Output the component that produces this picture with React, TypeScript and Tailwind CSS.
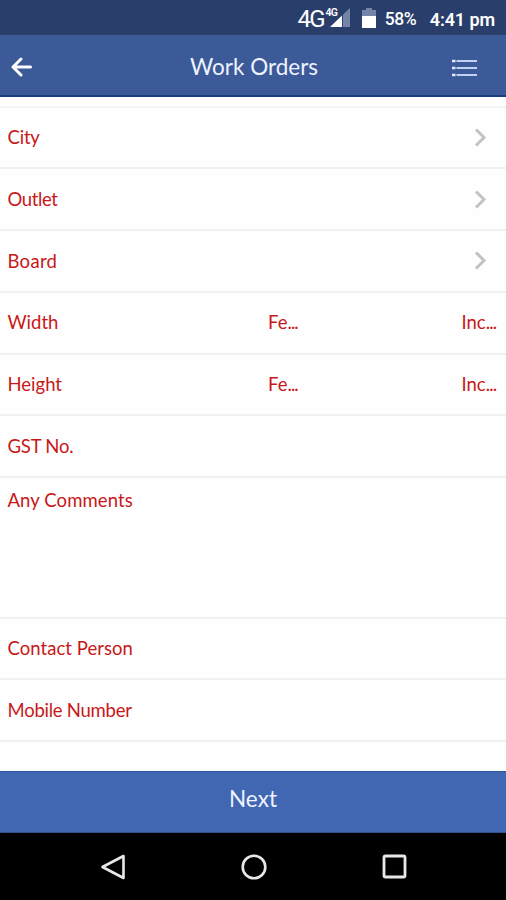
import type { ReactNode } from 'react';

function StatusBar() {
  return (
    <div className="flex h-[35px] items-center justify-end bg-[#293e6b] pr-[11px] font-['Roboto',sans-serif] text-white">
      <span className="mt-0.5 text-[24px] tracking-[-1.8px]">4G</span>
      <svg width="26" height="24" viewBox="0 0 26 24" className="ml-px">
        <text x="0.5" y="10" fontSize="10.5" fontWeight="600" fill="#fff" textLength="12.5">4G</text>
        <path d="M5 21 L17 9.5 V21Z" fill="#fff" />
        <path d="M18 8.5 L25 2 V21 H18Z" fill="#7384a6" />
      </svg>
      <svg width="14" height="22" viewBox="0 0 14 22" className="ml-[11px]">
        <path d="M4 1h6v2h4v7H0V3h4z" fill="#7384a6" />
        <path d="M0 9h14v12H0z" fill="#fff" />
      </svg>
      <span className="mt-[3px] ml-[9px] w-[45px] text-[17.5px] font-medium tracking-[-0.4px]">58%</span>
      <span className="mt-[3px] text-[18px] font-semibold tracking-[-0.1px]">4:41 pm</span>
    </div>
  );
}

function Header() {
  return (
    <header className="flex h-[62px] items-center justify-between border-b-2 border-[#173f80] bg-[#3c5998] pr-[29px] pl-[11px] text-white">
      <svg width="22" height="20" viewBox="0 0 22 20" fill="none" stroke="#fff" strokeWidth="3" strokeLinecap="round" strokeLinejoin="round" className="mt-[3px]">
        <path d="M10 2 L2 10 L10 18 M3 10 H19.5" />
      </svg>
      <h1 className="mt-1 ml-[23px] text-[22.5px] tracking-[0px] text-[#eef3ff]">Work Orders</h1>
      <svg width="25" height="18" viewBox="0 0 25 18" className="mt-[5px]">
        <path d="M0 2h3.5M0 9h3.5M0 16h3.5" stroke="#e2eaff" strokeWidth="2.5" />
        <path d="M4.5 2H25M4.5 9H25M4.5 16H25" stroke="#c2d1f2" strokeWidth="2" />
      </svg>
    </header>
  );
}

function Row({ label, spacing, children }: { label: string; spacing: string; children?: ReactNode }) {
  return (
    <div className="flex h-[61.8px] items-center border-b-2 border-[#f1f1f1] pt-px pr-[9px] pl-[7.5px]">
      <span className={`flex-1 ${spacing}`}>{label}</span>
      {children}
    </div>
  );
}

function Chevron() {
  return (
    <svg width="13" height="19" viewBox="0 0 13 19" fill="none" stroke="#c2c2c2" strokeWidth="3" className="mr-[10px] mb-px">
      <path d="M2 1.5 L10 9.5 L2 17.5" />
    </svg>
  );
}

function Units() {
  return (
    <>
      <span className="w-[193.5px]">Fe<span className="tracking-[-0.9px]">...</span></span>
      <span className="w-[35.5px] whitespace-nowrap">Inc<span className="tracking-[-0.9px]">...</span></span>
    </>
  );
}

export default function App() {
  return (
    <div className="flex h-[900px] w-[506px] flex-col overflow-hidden bg-white font-['Lato',sans-serif]">
      <StatusBar />
      <Header />
      <main className="h-[674px] bg-[#fefefe] text-[18.5px] text-[#c81818]">
        <div className="h-[10.5px] border-b-2 border-[#f3f5f3]" />
        <Row label="City" spacing="tracking-[-0.2px]"><Chevron /></Row>
        <Row label="Outlet" spacing="tracking-[-0.4px]"><Chevron /></Row>
        <Row label="Board" spacing="tracking-[0.3px]"><Chevron /></Row>
        <Row label="Width" spacing="tracking-[0px]"><Units /></Row>
        <Row label="Height" spacing="tracking-[0px]"><Units /></Row>
        <Row label="GST No." spacing="tracking-[-0.2px]" />
        <div className="h-[140.4px] border-b-2 border-[#f1f1f1] px-[7.5px] pt-[8.5px]">
          <span className="tracking-[0.1px]">Any Comments</span>
        </div>
        <Row label="Contact Person" spacing="tracking-[0.05px]" />
        <Row label="Mobile Number" spacing="tracking-[-0.25px]" />
      </main>
      <button className="h-[62px] border-t border-b border-t-[#2c56a0] border-b-[#31528f] bg-[#4267b2] pb-[7px] text-[22.5px] tracking-[0.1px] text-[#eef3ff]">
        Next
      </button>
      <nav className="flex h-[67px] items-center justify-between bg-black pr-[99px] pl-[101px]">
        <svg width="24" height="26" viewBox="0 0 24 26" fill="none" stroke="#e8e8e8" strokeWidth="2.6" strokeLinejoin="round">
          <path d="M22.5 2 V24 L1.5 13Z" />
        </svg>
        <svg width="26" height="26" viewBox="0 0 26 26" fill="none" stroke="#e8e8e8" strokeWidth="2.6">
          <circle cx="13" cy="13" r="11.3" />
        </svg>
        <svg width="25" height="25" viewBox="0 0 25 25" fill="none" stroke="#e8e8e8" strokeWidth="2.8">
          <rect x="2" y="2" width="21" height="21" rx="1.5" />
        </svg>
      </nav>
    </div>
  );
}
